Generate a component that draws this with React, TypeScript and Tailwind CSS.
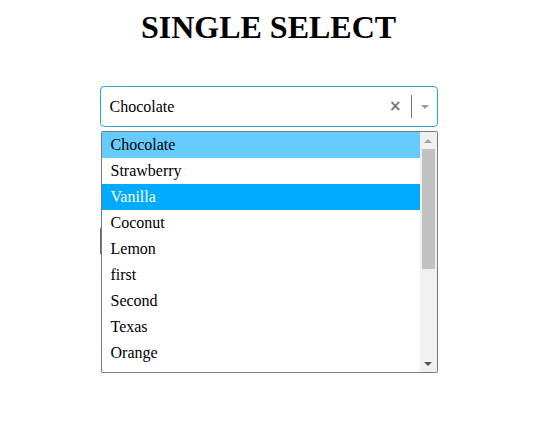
import { useState } from 'react'

const OPTIONS = [
  'Chocolate',
  'Strawberry',
  'Vanilla',
  'Coconut',
  'Lemon',
  'first',
  'Second',
  'Texas',
  'Orange',
]

export default function App() {
  const [value, setValue] = useState('Chocolate')
  const [hover, setHover] = useState('Vanilla')

  return (
    <div className="min-h-[439px] bg-white font-['Liberation_Serif',serif] text-black">
      <h1 className="pt-[9px] text-center text-[32px] font-bold leading-[37px]">SINGLE SELECT</h1>

      <div className="relative mx-auto mt-[40px] w-[338px]">
        <div className="flex h-[41px] items-center rounded-[4px] border border-[#2ea3dc] pl-[9px] pr-[8px]">
          <div className="flex-1 text-[16px]">{value}</div>
          <span className="mr-[9px] text-[15px] font-bold leading-none text-[#777] font-['DejaVu_Sans',sans-serif]">×</span>
          <span className="h-[23px] w-px bg-[#777]" />
          <span className="ml-[9px] h-0 w-0 border-x-[4px] border-t-[4px] border-x-transparent border-t-[#999]" />
        </div>

        {/* content sitting behind the open menu */}
        <div className="mt-[100px] h-[28px] w-[120px] rounded-l-[2px] border-l-2 border-[#666]" />

        <div className="absolute left-[1px] right-0 top-[45px] flex h-[242px] overflow-hidden rounded-[2px] border border-[#7a7a7a] bg-white">
          <ul className="flex-1">
            {OPTIONS.map((o) => {
              const selected = o === value
              const hovered = o === hover
              return (
                <li
                  key={o}
                  onClick={() => setValue(o)}
                  onMouseEnter={() => setHover(o)}
                  className={
                    'h-[26px] cursor-default pl-[9px] text-[16px] leading-[26px] ' +
                    (hovered
                      ? 'bg-[#00aaff] text-white'
                      : selected
                        ? 'bg-[#66ccff]'
                        : '')
                  }
                >
                  {o}
                </li>
              )
            })}
          </ul>
          <div className="flex w-[17px] flex-col bg-[#f0f0f0]">
            <div className="flex h-[17px] items-center justify-center">
              <span className="h-0 w-0 border-x-[4px] border-b-[4px] border-x-transparent border-b-[#a3a3a3]" />
            </div>
            <div className="flex-1">
              <div className="mx-[2px] h-[120px] bg-[#c1c1c1]" />
            </div>
            <div className="flex h-[17px] items-center justify-center">
              <span className="h-0 w-0 border-x-[4px] border-t-[4px] border-x-transparent border-t-[#505050]" />
            </div>
          </div>
        </div>
      </div>
    </div>
  )
}
